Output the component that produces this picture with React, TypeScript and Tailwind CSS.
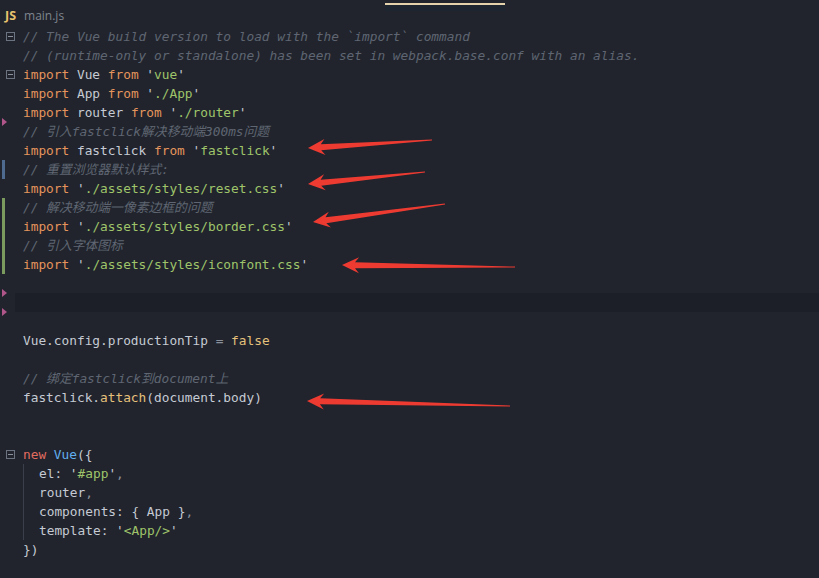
import React from 'react';

type Tok = [string, string];

const C = {
  txt: 'text-[#c5cad3]',
  kw: 'text-[#e5955c]',
  str: 'text-[#9fc46a]',
  q: 'text-[#c5cad3]',
  fn: 'text-[#e5c07b]',
  blue: 'text-[#61afef]',
  red: 'text-[#e06c60]',
  pun: 'text-[#8b919b]',
};

const s = (v: string): Tok[] => [[C.q, "'"], [C.str, v], [C.q, "'"]];

// each line: comment text, list of tokens, or blank
const lines: (string | Tok[] | null)[] = [
  '// The Vue build version to load with the `import` command',
  '// (runtime-only or standalone) has been set in webpack.base.conf with an alias.',
  [[C.kw, 'import'], [C.txt, ' Vue '], [C.kw, 'from'], [C.txt, ' '], ...s('vue')],
  [[C.kw, 'import'], [C.txt, ' App '], [C.kw, 'from'], [C.txt, ' '], ...s('./App')],
  [[C.kw, 'import'], [C.txt, ' router '], [C.kw, 'from'], [C.txt, ' '], ...s('./router')],
  '// 引入fastclick解决移动端300ms问题',
  [[C.kw, 'import'], [C.txt, ' fastclick '], [C.kw, 'from'], [C.txt, ' '], ...s('fastclick')],
  '// 重置浏览器默认样式:',
  [[C.kw, 'import'], [C.txt, ' '], ...s('./assets/styles/reset.css')],
  '// 解决移动端一像素边框的问题',
  [[C.kw, 'import'], [C.txt, ' '], ...s('./assets/styles/border.css')],
  '// 引入字体图标',
  [[C.kw, 'import'], [C.txt, ' '], ...s('./assets/styles/iconfont.css')],
  null,
  null,
  null,
  [[C.txt, 'Vue.config.productionTip '], [C.pun, '='], [C.txt, ' '], [C.fn, 'false']],
  null,
  '// 绑定fastclick到document上',
  [[C.txt, 'fastclick.'], [C.fn, 'attach'], [C.txt, '(document.body)']],
  null,
  null,
  [[C.red, 'new'], [C.txt, ' '], [C.blue, 'Vue'], [C.txt, '({']],
  [[C.txt, 'el: '], ...s('#app'), [C.pun, ',']],
  [[C.txt, 'router'], [C.pun, ',']],
  [[C.txt, 'components: { App }'], [C.pun, ',']],
  [[C.txt, 'template: '], ...s('<App/>')],
  [[C.txt, '})']],
  null,
];

const folds = [0, 2, 22];
const modified = [7];
const added = [9, 10, 11, 12];
const deleted = [5, 14, 15];
const indented = [23, 24, 25, 26];
const current = 14;

const arrows: [number, number, number, number][] = [
  [432, 140, 308, 148],
  [425, 172, 308, 184],
  [445, 204, 313, 222],
  [515, 267, 342, 265],
  [510, 406, 307, 401],
];

function arrowPoints(tx: number, ty: number, px: number, py: number) {
  const dx = px - tx;
  const dy = py - ty;
  const len = Math.hypot(dx, dy);
  const ux = dx / len;
  const uy = dy / len;
  const nx = -uy;
  const ny = ux;
  const head = 17;
  const hw = 8;
  const sw = 3;
  const bx = px - ux * head;
  const by = py - uy * head;
  const nbx = px - ux * (head - 4);
  const nby = py - uy * (head - 4);
  const pts = [
    [tx + nx * 0.4, ty + ny * 0.4],
    [nbx + nx * sw, nby + ny * sw],
    [bx + nx * hw, by + ny * hw],
    [px, py],
    [bx - nx * hw, by - ny * hw],
    [nbx - nx * sw, nby - ny * sw],
    [tx - nx * 0.4, ty - ny * 0.4],
  ];
  return pts.map(p => `${p[0].toFixed(1)},${p[1].toFixed(1)}`).join(' ');
}

const FoldBox = () => (
  <span className="ml-[3px] shrink-0 w-[9px] h-[9px] border border-[#6b7280] flex items-center justify-center">
    <span className="w-[5px] h-px bg-[#8b919b]" />
  </span>
);

const Gutter: React.FC<{ i: number }> = ({ i }) => {
  let bar = 'bg-transparent';
  if (modified.includes(i)) bar = 'bg-[#4f6a8f]';
  if (added.includes(i)) bar = 'bg-[#7a9a5e]';
  return (
    <div className="relative w-[15px] shrink-0 flex items-center pl-[2px]">
      <span className={`w-[3px] h-full ${bar}`} />
      {folds.includes(i) && <FoldBox />}
      {deleted.includes(i) && (
        // deletion marker sits on the boundary with the previous line
        <span className="absolute left-[2px] -top-[4px] w-0 h-0 border-y-[4px] border-y-transparent border-l-[5px] border-l-[#b0568a]" />
      )}
    </div>
  );
};

const App: React.FC = () => {
  return (
    <div className="w-[819px] h-[578px] overflow-hidden bg-[#21242d] relative">
      {/* tab bar */}
      <div className="h-[27px] flex items-start">
        <div className="flex items-center gap-[8px] pl-[5px] pt-[7px] w-[385px]">
          <span className="text-[12.5px] font-bold text-[#e8c26d] font-['Open_Sans',sans-serif]">JS</span>
          <span className="text-[12px] text-[#7f848e] font-['Open_Sans',sans-serif]">main.js</span>
        </div>
        <div className="w-[120px] mt-[3px] flex flex-col">
          <div className="h-[2px] bg-[#e4d2ad]" />
          <div className="h-[6px] bg-[#1c2530]" />
        </div>
      </div>

      {/* code */}
      <div className="flex flex-col font-['DejaVu_Sans_Mono','Noto_Sans_CJK_SC',monospace] text-[12.8px] leading-[19px]">
        {lines.map((ln, i) => (
          <div key={i} className="flex h-[19px]">
            <Gutter i={i} />
            <div className={`flex-1 pl-[8px] whitespace-pre ${i === current ? 'bg-[#1c1f27]' : ''}`}>
              <div className={indented.includes(i) ? 'border-l border-[#3a3f4b] pl-[15px]' : ''}>
                {typeof ln === 'string' ? (
                  <span className="italic text-[#5f6672]">{ln}</span>
                ) : ln ? (
                  ln.map((t, j) => (
                    <span key={j} className={t[0]}>{t[1]}</span>
                  ))
                ) : null}
              </div>
            </div>
          </div>
        ))}
      </div>

      {/* annotation arrows drawn over the code */}
      <svg className="absolute inset-0 pointer-events-none" width="819" height="578">
        {arrows.map((a, i) => (
          <polygon key={i} points={arrowPoints(a[0], a[1], a[2], a[3])} fill="#ee3b32" />
        ))}
      </svg>
    </div>
  );
};

export default App;
